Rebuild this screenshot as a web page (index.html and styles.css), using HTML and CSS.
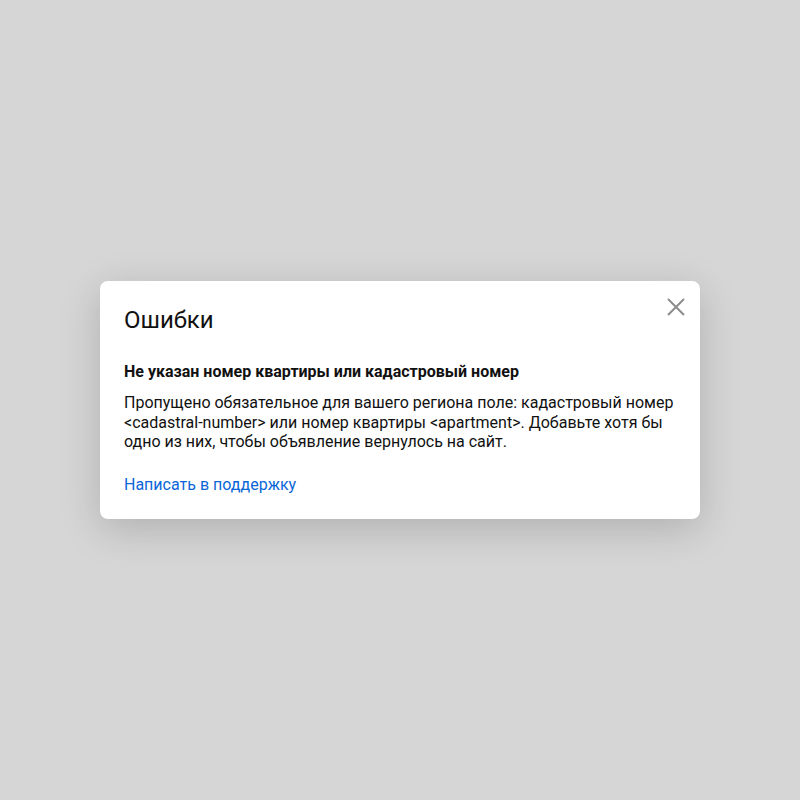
FILE: index.html
```html
<!DOCTYPE html>
<html lang="ru">
<head>
<meta charset="utf-8">
<link rel="stylesheet" href="styles.css">
</head>
<body>
<div class="overlay">
  <div class="modal">
    <button class="close" aria-label="Закрыть">
      <svg width="20" height="20" viewBox="0 0 20 20"><path d="M2 2L18 18M18 2L2 18" stroke="#8c8c8c" stroke-width="2" fill="none"/></svg>
    </button>
    <h2 class="title">Ошибки</h2>
    <h3 class="subtitle">Не указан номер квартиры или кадастровый номер</h3>
    <p class="text">Пропущено обязательное для вашего региона поле: кадастровый номер &lt;cadastral-number&gt; или номер квартиры &lt;apartment&gt;. Добавьте хотя бы одно из них, чтобы объявление вернулось на сайт.</p>
    <a class="link" href="#">Написать в поддержку</a>
  </div>
</div>
</body>
</html>
```
FILE: styles.css
```css
html, body {
  margin: 0;
  padding: 0;
  height: 100%;
}
body {
  background: #d6d6d6;
  font-family: Roboto, "Noto Sans", sans-serif;
  color: #111;
}
.overlay {
  height: 100%;
  display: flex;
  align-items: center;
  justify-content: center;
}
.modal {
  position: relative;
  box-sizing: border-box;
  width: 600px;
  background: #fff;
  border-radius: 8px;
  padding: 25px 24px 24px;
  box-shadow: 0 10px 40px rgba(0,0,0,0.18);
}
.close {
  position: absolute;
  top: 14px;
  right: 12px;
  width: 24px;
  height: 24px;
  padding: 2px;
  border: 0;
  background: none;
  cursor: pointer;
}
.close svg { display: block; }
.title {
  margin: 0 0 28px;
  font-size: 24px;
  line-height: 28px;
  font-weight: 400;
}
.subtitle {
  margin: 0 0 11px;
  font-size: 16px;
  line-height: 20px;
  font-weight: 700;
}
.text {
  margin: 0 0 23px;
  font-size: 16px;
  line-height: 19.5px;
}
.link {
  display: block;
  font-size: 16px;
  line-height: 20px;
  color: #0a66d9;
  text-decoration: none;
}
```
